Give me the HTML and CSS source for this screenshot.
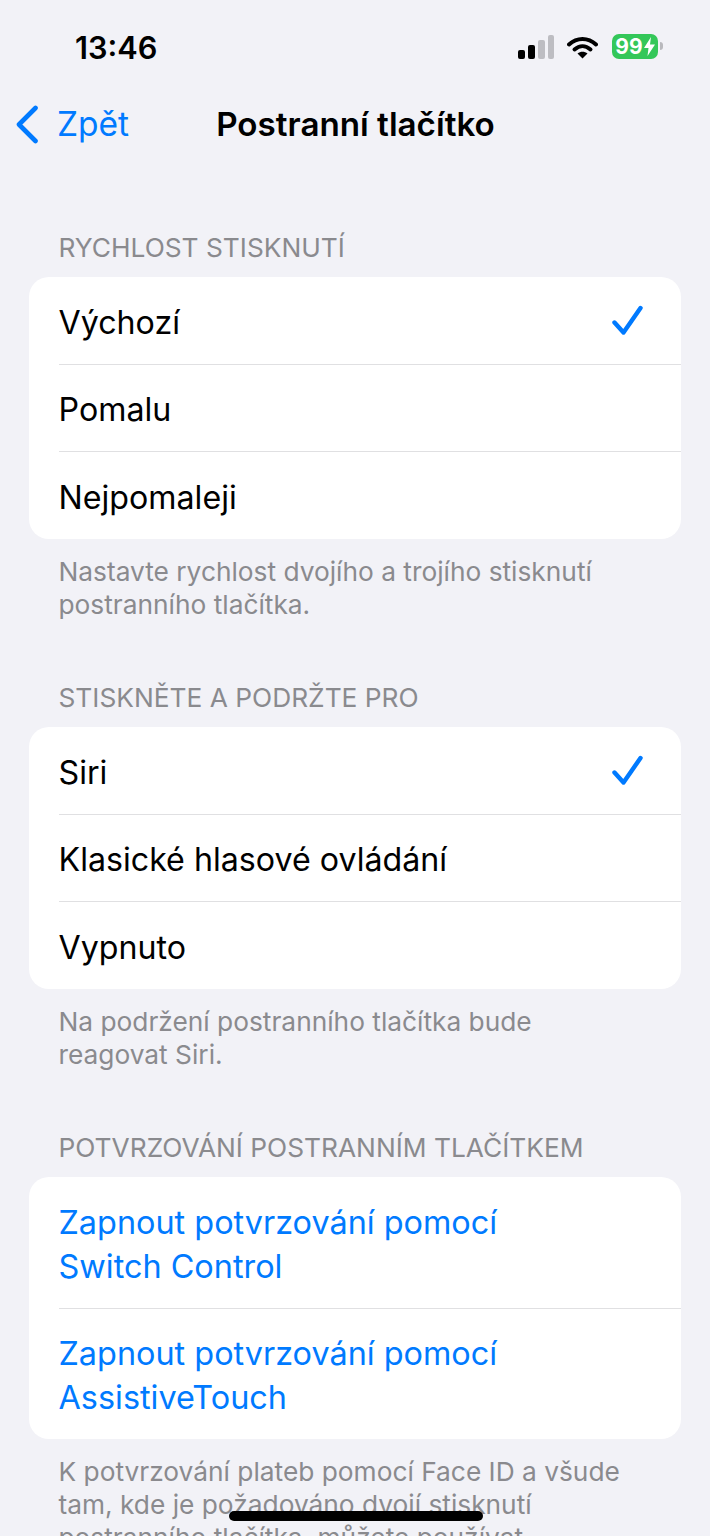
FILE: index.html
```html
<!DOCTYPE html>
<html lang="cs">
<head>
    <meta charset="UTF-8">
    <meta name="viewport" content="width=device-width, initial-scale=1.0">
    <title>Postranní tlačítko</title>
    <link rel="stylesheet" href="styles.css">
</head>
<body>
    <!-- Status bar -->
    <div class="status-bar">
        <span class="status-time">13:46</span>
        <div class="status-icons">
            <svg class="icon-signal" width="36" height="24" viewBox="0 0 36 24">
                <rect x="0" y="15" width="7" height="9" rx="2" fill="#000"/>
                <rect x="10" y="10" width="7" height="14" rx="2" fill="#000"/>
                <rect x="20" y="5" width="7" height="19" rx="2" fill="#bdbdc2"/>
                <rect x="30" y="0" width="6" height="24" rx="2" fill="#bdbdc2"/>
            </svg>
            <svg class="icon-wifi" width="31" height="23" viewBox="0 0 31 23">
                <path d="M2 8.5C10 1 21 1 29 8.5" fill="none" stroke="#000" stroke-width="4" stroke-linecap="round"/>
                <path d="M7.5 13.5C12.5 9 18.5 9 23.5 13.5" fill="none" stroke="#000" stroke-width="4" stroke-linecap="round"/>
                <path d="M15.5 22.5L10.5 17.5C13.5 15 17.5 15 20.5 17.5Z" fill="#000"/>
            </svg>
            <div class="battery">
                <div class="battery-body">
                    <span>99</span>
                    <svg width="11" height="19" viewBox="0 0 11 19"><path d="M7 0L0 11H4.5L3.5 19L11 7.5H6Z" fill="#fff"/></svg>
                </div>
                <div class="battery-cap"></div>
            </div>
        </div>
    </div>

    <!-- Nav bar -->
    <div class="nav-bar">
        <a class="nav-back" href="#">
            <svg width="24" height="39" viewBox="0 0 24 39"><path d="M20.5 3L4 19.5L20.5 36" fill="none" stroke="#007aff" stroke-width="4.6" stroke-linecap="round" stroke-linejoin="round"/></svg>
            <span>Zpět</span>
        </a>
        <h1 class="nav-title">Postranní tlačítko</h1>
    </div>

    <div class="section section-first">
        <div class="section-header">RYCHLOST STISKNUTÍ</div>
        <div class="card">
            <div class="row">
                <span>Výchozí</span>
                <svg class="check" width="32" height="32" viewBox="0 0 32 32"><path d="M2.5 17.5L11.5 27.5L28.5 3" fill="none" stroke="#007aff" stroke-width="4.4" stroke-linecap="round" stroke-linejoin="round"/></svg>
            </div>
            <div class="row"><span>Pomalu</span></div>
            <div class="row"><span>Nejpomaleji</span></div>
        </div>
        <p class="section-footer">Nastavte rychlost dvojího a trojího stisknutí<br>postranního tlačítka.</p>
    </div>

    <div class="section">
        <div class="section-header">STISKNĚTE A PODRŽTE PRO</div>
        <div class="card">
            <div class="row">
                <span>Siri</span>
                <svg class="check" width="32" height="32" viewBox="0 0 32 32"><path d="M2.5 17.5L11.5 27.5L28.5 3" fill="none" stroke="#007aff" stroke-width="4.4" stroke-linecap="round" stroke-linejoin="round"/></svg>
            </div>
            <div class="row"><span>Klasické hlasové ovládání</span></div>
            <div class="row"><span>Vypnuto</span></div>
        </div>
        <p class="section-footer">Na podržení postranního tlačítka bude<br>reagovat Siri.</p>
    </div>

    <div class="section">
        <div class="section-header">POTVRZOVÁNÍ POSTRANNÍM TLAČÍTKEM</div>
        <div class="card">
            <div class="row row-link"><span>Zapnout potvrzování pomocí<br>Switch Control</span></div>
            <div class="row row-link"><span>Zapnout potvrzování pomocí<br>AssistiveTouch</span></div>
        </div>
        <p class="section-footer">K potvrzování plateb pomocí Face ID a všude<br>tam, kde je požadováno dvojí stisknutí<br>postranního tlačítka, můžete používat</p>
    </div>

    <!-- Home indicator -->
    <div class="home-indicator"></div>
</body>
</html>
```

FILE: styles.css
```css
/* General Styles */
:root {
    --background: #f2f2f7;
    --blue: #007aff;
    --secondary: #8a8a8e;
    --separator: #e0e0e2;
}

html, body {
    height: 1536px;
    overflow: hidden;
}

body {
    margin: 0;
    position: relative;
    background-color: var(--background);
    color: #000;
    font-family: 'Inter', 'Liberation Sans', sans-serif;
}

/* Status bar */
.status-bar {
    height: 90px;
    display: flex;
    justify-content: space-between;
    align-items: center;
    padding: 4px 47px 0 75px;
    box-sizing: border-box;
}

.status-time {
    font-size: 30.7px;
    font-weight: 600;
}

.status-icons {
    display: flex;
    align-items: center;
}

.icon-signal {
    margin-right: 13px;
}

.icon-wifi {
    margin-right: 14px;
}

.battery {
    display: flex;
    align-items: center;
    margin-top: -2px;
}

.battery-body {
    width: 46px;
    height: 25px;
    border-radius: 7px;
    background-color: #34c759;
    color: #fff;
    font-size: 21px;
    font-weight: 700;
    display: flex;
    align-items: center;
    justify-content: center;
    gap: 1px;
}

.battery-cap {
    width: 3px;
    height: 8px;
    margin-left: 2px;
    border-radius: 0 3px 3px 0;
    background-color: #b9b9bd;
}

/* Nav bar */
.nav-bar {
    height: 68px;
    display: flex;
    align-items: center;
    justify-content: center;
    position: relative;
}

.nav-back {
    position: absolute;
    left: 15px;
    top: 14px;
    display: flex;
    align-items: center;
    gap: 18px;
    color: var(--blue);
    text-decoration: none;
    font-size: 33.5px;
}

.nav-title {
    margin: 0 0 0 1px;
    font-size: 33.2px;
    font-weight: 600;
}

/* Sections */
.section {
    margin-bottom: 46px;
}

.section-first {
    margin-top: 59px;
}

.section-header {
    height: 60px;
    padding-left: 58.5px;
    display: flex;
    align-items: center;
    color: var(--secondary);
    font-size: 26.3px;
}

.card {
    margin: 0 29px;
    background-color: #fff;
    border-radius: 20px;
    overflow: hidden;
}

.row {
    min-height: 87px;
    margin-left: 30px;
    padding: 4px 37px 0 0;
    display: flex;
    align-items: center;
    justify-content: space-between;
    font-size: 32.2px;
    line-height: 44px;
    border-bottom: 1px solid var(--separator);
    box-sizing: border-box;
}

.row span {
    margin-left: -0.5px;
}

.row:first-child {
    min-height: 88px;
}

.row:last-child {
    border-bottom: none;
}

.row-link {
    font-size: 32.4px;
    color: var(--blue);
}

.row-link:first-child {
    min-height: 132px;
}

.row-link:last-child {
    min-height: 130px;
}

.check {
    margin-top: -3px;
}

.section-footer {
    margin: 16px 0 0;
    padding: 0 58.5px;
    color: var(--secondary);
    font-size: 26.3px;
    line-height: 33px;
}

/* Home indicator */
.home-indicator {
    position: absolute;
    left: 229px;
    top: 1511px;
    width: 254px;
    height: 10px;
    border-radius: 5px;
    background-color: #000;
}
```
